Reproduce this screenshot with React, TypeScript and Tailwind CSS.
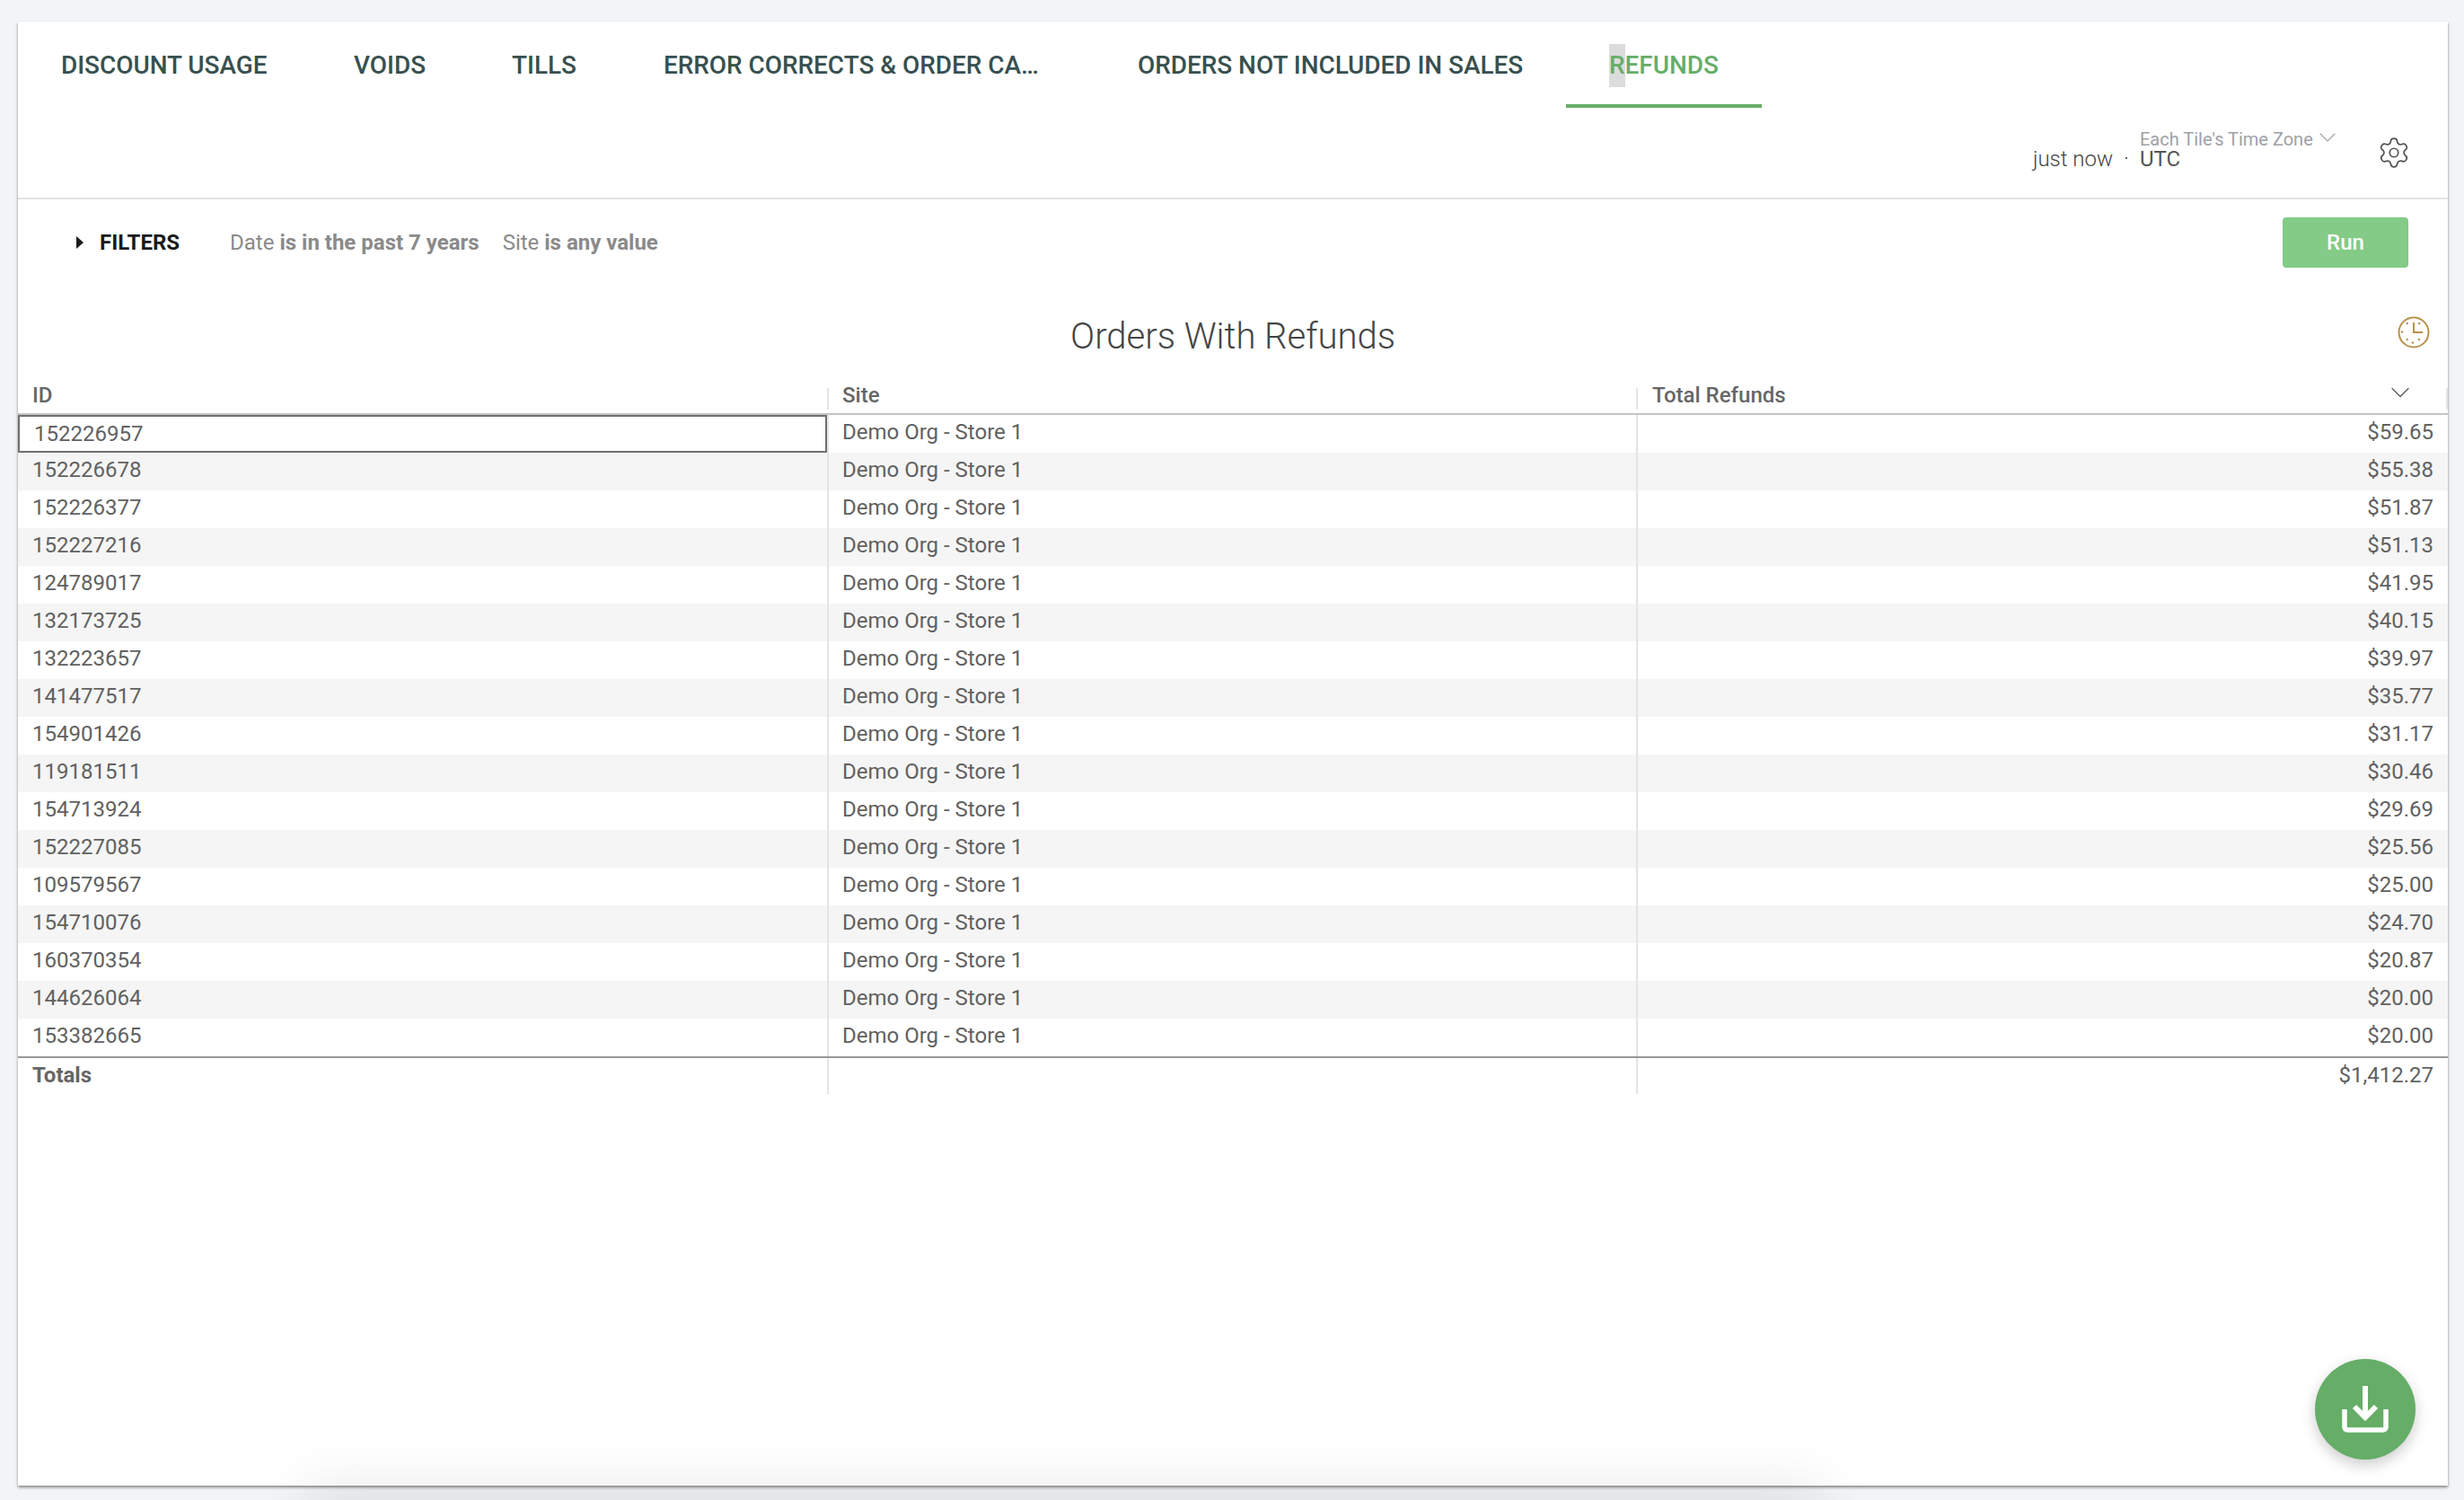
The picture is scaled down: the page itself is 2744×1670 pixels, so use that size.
import { ChevronDown, Settings } from 'lucide-react';

const rows = [
  ['152226957', '$59.65'],
  ['152226678', '$55.38'],
  ['152226377', '$51.87'],
  ['152227216', '$51.13'],
  ['124789017', '$41.95'],
  ['132173725', '$40.15'],
  ['132223657', '$39.97'],
  ['141477517', '$35.77'],
  ['154901426', '$31.17'],
  ['119181511', '$30.46'],
  ['154713924', '$29.69'],
  ['152227085', '$25.56'],
  ['109579567', '$25.00'],
  ['154710076', '$24.70'],
  ['160370354', '$20.87'],
  ['144626064', '$20.00'],
  ['153382665', '$20.00'],
];

function Tabs() {
  return (
    <div className="flex h-24 whitespace-nowrap text-[27.9px] font-medium leading-none text-[#37504f]">
      <div className="flex w-[326px] items-center px-12 pt-0.5">DISCOUNT USAGE</div>
      <div className="flex w-[176px] items-center px-12 pt-0.5">VOIDS</div>
      <div className="flex w-[169px] items-center px-12 pt-0.5">TILLS</div>
      <div className="flex w-[528px] items-center px-12 pt-0.5">ERROR CORRECTS &amp; ORDER CA…</div>
      <div className="flex w-[525px] items-center px-12 pt-0.5">ORDERS NOT INCLUDED IN SALES</div>
      <div className="flex w-[218px] items-center border-b-4 border-[#66ad68] px-12 pt-1.5 text-[#66ad68]">
        <span className="bg-[linear-gradient(90deg,#dcdcdc_18px,transparent_18px)] py-2.5">REFUNDS</span>
      </div>
    </div>
  );
}

function Toolbar() {
  return (
    <div className="flex h-[102px] items-start justify-end border-b-2 border-[#e4e4e4] pr-11">
      <div className="mt-[43px] text-[24px] font-light leading-7 text-[#444]">just now</div>
      <div className="mx-3 mt-[43px] text-[24px] font-light leading-7 text-[#444]">·</div>
      <div className="mt-[25px] w-[264px]">
        <div className="flex items-center text-[20px] leading-5 text-[#9ea1a6]">
          Each Tile's Time Zone
          <ChevronDown className="-my-3 h-8 w-8 -translate-y-0.5" strokeWidth={0.8} />
        </div>
        <div className="text-[24px] leading-6 text-[#555]">UTC</div>
      </div>
      <Settings className="-mr-[3px] mt-[31px] h-[38px] w-[38px] text-[#555]" strokeWidth={1.1} />
    </div>
  );
}

function FilterBar() {
  return (
    <div className="flex h-24 items-center pr-11 text-[24px] text-[#8a8a8a]">
      <svg className="ml-[65px] h-[14px] w-2" viewBox="0 0 8 14">
        <path d="M0 0 L8 7 L0 14 Z" fill="#1a1a1a" />
      </svg>
      <span className="ml-[18px] font-bold text-[#1a1a1a]">FILTERS</span>
      <span className="ml-14">
        Date <span className="font-bold">is in the past 7 years</span>
      </span>
      <span className="ml-[26px]">
        Site <span className="font-bold">is any value</span>
      </span>
      <button className="ml-auto h-14 w-[140px] rounded-[4px] bg-[#83cb86] text-[24px] font-medium text-white">Run</button>
    </div>
  );
}

function TitleRow() {
  return (
    <div className="grid h-[102px] grid-cols-[1fr_auto_1fr]">
      <div />
      <div className="pt-[37px] text-[40px] font-light leading-10 text-[#444]">Orders With Refunds</div>
      <svg className="mr-5 mt-[34px] h-9 w-9 justify-self-end" viewBox="0 0 36 36" fill="none" stroke="#b8914c" strokeWidth="2">
        <circle cx="18" cy="18" r="16.5" />
        <path d="M18 7 V18 H28" />
        <g fill="#b8914c" stroke="none">
          <circle cx="10.700" cy="8" r="1.2" />
          <circle cx="24" cy="8" r="1.2" />
          <circle cx="5" cy="17.500" r="1.2" />
          <circle cx="10.700" cy="26" r="1.2" />
          <circle cx="17" cy="29.500" r="1.2" />
          <circle cx="24" cy="26" r="1.2" />
        </g>
      </svg>
    </div>
  );
}

function DataTable() {
  return (
    <div className="text-[24px] text-[#616161]">
      <div className="grid h-[42px] grid-cols-[901px_901px_904px] border-b-2 border-[#c0c5c9] font-medium text-[#666]">
        <div className="pl-4 pt-2 leading-6">ID</div>
        <div className="mt-3 h-6 border-l-2 border-[#e4e4e4] pl-[15px] leading-4">Site</div>
        <div className="mt-3 flex h-6 justify-between border-l-2 border-r-2 border-[#e4e4e4] pl-4 leading-4">
          Total Refunds
          <ChevronDown className="-mt-[13px] mr-[33px] h-9 w-9 text-[#555]" strokeWidth={0.8} />
        </div>
      </div>
      {rows.map(([id, total], i) => (
        <div key={id} className={`grid h-[42px] grid-cols-[901px_901px_904px] leading-[39px] ${i % 2 === 1 ? 'bg-[#f5f5f5]' : 'bg-white'}`}>
          <div className={i === 0 ? 'border-2 border-[#6f6f6f] pl-4 leading-[38px]' : 'pl-4'}>{id}</div>
          <div className="border-l-2 border-[#e4e4e4] pl-[15px]">Demo Org - Store 1</div>
          <div className="border-l-2 border-[#e4e4e4] pr-4 text-right">{total}</div>
        </div>
      ))}
      <div className="grid h-[42px] grid-cols-[901px_901px_904px] border-t-2 border-[#999] leading-[38px]">
        <div className="pl-4 font-bold text-[#666]">Totals</div>
        <div className="border-l-2 border-[#e4e4e4]" />
        <div className="border-l-2 border-[#e4e4e4] pr-4 text-right">$1,412.27</div>
      </div>
    </div>
  );
}

function DownloadButton() {
  return (
    <button className="absolute left-[2578px] top-[1513px] h-28 w-28 rounded-full bg-[#66ad68] shadow-[0_6px_16px_rgba(0,0,0,0.2)]">
      <svg className="h-28 w-28" viewBox="0 0 112 112" fill="none" stroke="white">
        <path d="M33 56 V76 a3 3 0 0 0 3 3 H76 a3 3 0 0 0 3 -3 V56" strokeWidth="5.500" />
        <path d="M56 30 V64 M44 53 L56 65 L68 53" strokeWidth="6" />
      </svg>
    </button>
  );
}

export default function App() {
  return (
    <div className="relative h-[1670px] w-[2744px] overflow-hidden bg-[#f3f4f6] pl-5 pr-[18px] pt-6 font-['Roboto',sans-serif]">
      <div className="h-[1630px] bg-white shadow-[0_2px_3px_rgba(0,0,0,0.45)]">
        <Tabs />
        <Toolbar />
        <FilterBar />
        <TitleRow />
        <DataTable />
      </div>
      <DownloadButton />
      <div className="absolute left-[370px] top-[1680px] h-10 w-[1630px] shadow-[0_0_60px_30px_rgba(0,0,0,0.08)]" />
    </div>
  );
}
